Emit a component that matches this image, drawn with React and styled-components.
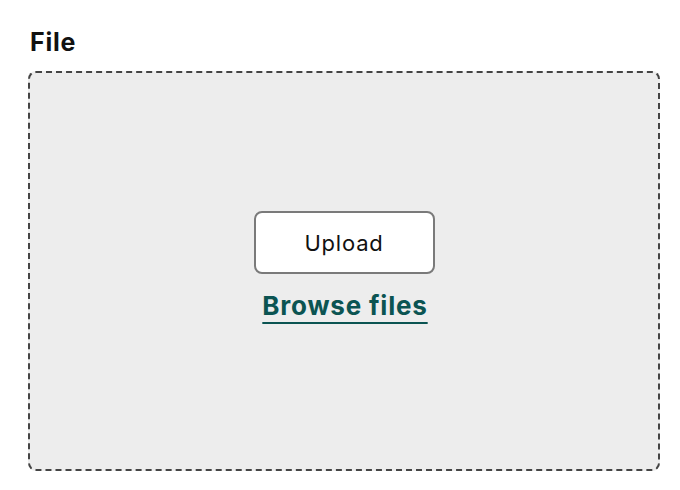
import React from "react";
import styled, { createGlobalStyle } from "styled-components";

const Global = createGlobalStyle`
  html, body { margin: 0; padding: 0; background: #fff; }
  body { font-family: Inter, "Noto Sans", sans-serif; color: #111; }
`;

const Field = styled.div`
  padding: 26px 20px 0 28px;
  display: flex;
  flex-direction: column;
`;

const Label = styled.div`
  font-size: 25px;
  font-weight: 700;
  line-height: 32px;
  letter-spacing: 0.8px;
  margin: 0 0 13px 2px;
  color: #111;
`;

const Drop = styled.div`
  box-sizing: border-box;
  width: 632px;
  height: 400px;
  border: 2px dashed #444;
  border-radius: 8px;
  background: #ededed;
  display: flex;
  flex-direction: column;
  align-items: center;
  justify-content: center;
  gap: 16px;
  padding-bottom: 10px;
`;

const Button = styled.button`
  box-sizing: border-box;
  width: 181px;
  height: 63px;
  border: 2px solid #7a7a7a;
  border-radius: 8px;
  background: #fff;
  font-family: inherit;
  font-size: 22px;
  letter-spacing: 0.8px;
  color: #111;
`;

const Browse = styled.a`
  font-size: 26px;
  font-weight: 700;
  letter-spacing: 0.8px;
  color: #0b5452;
  text-decoration: underline;
  text-decoration-thickness: 2px;
  text-underline-offset: 7px;
  margin-left: 2px;
  cursor: pointer;
`;

export default function App() {
  return (
    <>
      <Global />
      <Field>
        <Label>File</Label>
        <Drop>
          <Button>Upload</Button>
          <Browse>Browse files</Browse>
        </Drop>
      </Field>
    </>
  );
}
